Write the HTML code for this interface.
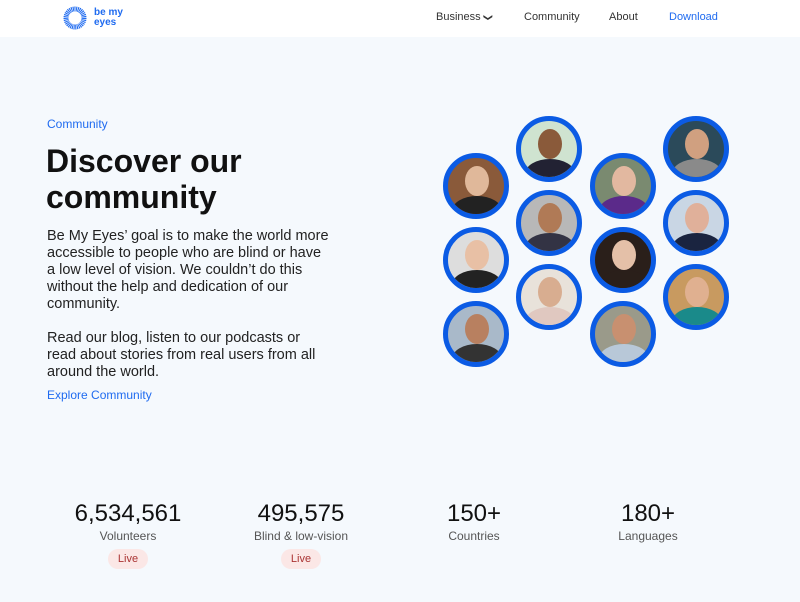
<!DOCTYPE html>
<html><head><meta charset="utf-8"><style>
*{margin:0;padding:0;box-sizing:border-box}
body{width:800px;height:602px;overflow:hidden;background:#f5f9fd;font-family:"Liberation Sans",sans-serif;position:relative;color:#1a1a1a}
.nav{position:absolute;top:0;left:0;width:800px;height:37px;background:#fff}
.nav a{position:absolute;top:11px;font-size:11px;color:#333;text-decoration:none}
.t{position:absolute;white-space:nowrap}
.c{position:absolute;width:66px;height:66px;border-radius:50%;border:5px solid #0b5be4;overflow:hidden}
.c i{position:absolute;left:17px;top:8px;width:24px;height:30px;border-radius:50%;background:#c99577}
.c b{position:absolute;left:4px;top:38px;width:50px;height:30px;border-radius:50% 50% 0 0;background:#2b3340}
.n{position:absolute;width:160px;text-align:center;font-size:24px;top:500px;color:#111}
.l{position:absolute;width:160px;text-align:center;font-size:12px;top:529px;color:#555}
.p{position:absolute;top:549px;width:40px;height:20px;border-radius:10px;background:#fbe7e6;color:#a33;font-size:11px;text-align:center;line-height:20px}
</style></head><body>
<div class="nav">
<svg style="position:absolute;left:61px;top:4px" width="28" height="28" viewBox="0 0 28 28"><g stroke="#1f6bf0" stroke-width="1.3">
<circle cx="14" cy="14" r="9" fill="none" stroke-width="5" stroke-dasharray="1 0.6"/></g><circle cx="14" cy="14" r="5.5" fill="#fff"/></svg>
<div class="t" style="left:94px;top:8px;font-size:10px;font-weight:bold;color:#1f6bf0;line-height:10px">be my<br>eyes</div>
<a style="left:436px">Business <span style="font-size:9px;display:inline-block;transform:rotate(90deg)">&#10095;</span></a>
<a style="left:524px">Community</a>
<a style="left:609px">About</a>
<a style="left:669px;color:#1f6bf0">Download</a>
</div>
<div class="t" style="left:47px;top:117px;font-size:12px;color:#1f6bf0">Community</div>
<div class="t" style="left:46px;top:143px;font-size:32px;font-weight:bold;line-height:36px;color:#111">Discover our<br>community</div>
<div class="t" style="left:47px;top:228px;font-size:14.5px;line-height:17px;color:#222">Be My Eyes’ goal is to make the world more<br>accessible to people who are blind or have<br>a low level of vision. We couldn’t do this<br>without the help and dedication of our<br>community.</div>
<div class="t" style="left:47px;top:330px;font-size:14.5px;line-height:17px;color:#222">Read our blog, listen to our podcasts or<br>read about stories from real users from all<br>around the world.</div>
<div class="t" style="left:47px;top:388px;font-size:12px;color:#1f6bf0">Explore Community</div>

<div class="c" style="left:443px;top:153px;background:#8a5a3a"><i style="background:#e0b89a"></i><b style="background:#222"></b></div>
<div class="c" style="left:443px;top:227px;background:#ddd"><i style="background:#e8c0a5"></i><b style="background:#222"></b></div>
<div class="c" style="left:443px;top:301px;background:#a9b9c9"><i style="background:#b88060"></i><b style="background:#333"></b></div>
<div class="c" style="left:516px;top:116px;background:#cfe3d0"><i style="background:#8a5a3a"></i><b style="background:#223"></b></div>
<div class="c" style="left:516px;top:190px;background:#b8b8b8"><i style="background:#b07a56"></i><b style="background:#334"></b></div>
<div class="c" style="left:516px;top:264px;background:#e8e2da"><i style="background:#d8ad90"></i><b style="background:#e0c8c0"></b></div>
<div class="c" style="left:590px;top:153px;background:#7a8a70"><i style="background:#e2b8a0"></i><b style="background:#5b2a8a"></b></div>
<div class="c" style="left:590px;top:227px;background:#2a1f1a"><i style="background:#e4c0a8"></i><b style="background:#2a1f1a"></b></div>
<div class="c" style="left:590px;top:301px;background:#9a9a8a"><i style="background:#c89070"></i><b style="background:#b8c8d8"></b></div>
<div class="c" style="left:663px;top:116px;background:#2b4a5a"><i style="background:#d0a080"></i><b style="background:#8a8a8a"></b></div>
<div class="c" style="left:663px;top:190px;background:#c9d6e4"><i style="background:#e0b09a"></i><b style="background:#1a2440"></b></div>
<div class="c" style="left:663px;top:264px;background:#c89a60"><i style="background:#e0b090"></i><b style="background:#1a8a8a"></b></div>

<div class="n" style="left:48px">6,534,561</div><div class="l" style="left:48px">Volunteers</div><div class="p" style="left:108px">Live</div>
<div class="n" style="left:221px">495,575</div><div class="l" style="left:221px">Blind &amp; low-vision</div><div class="p" style="left:281px">Live</div>
<div class="n" style="left:394px">150+</div><div class="l" style="left:394px">Countries</div>
<div class="n" style="left:568px">180+</div><div class="l" style="left:568px">Languages</div>
</body></html>
